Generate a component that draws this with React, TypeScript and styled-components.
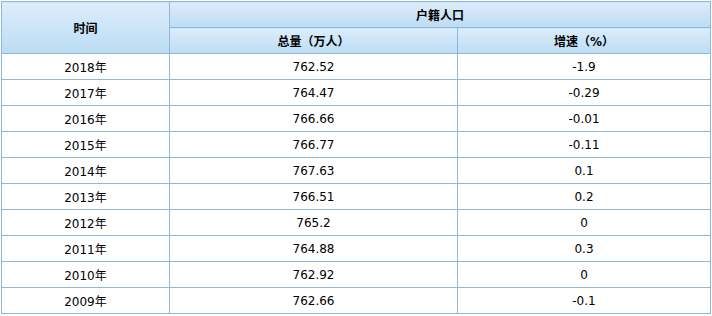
import React from "react"
import styled, { createGlobalStyle } from "styled-components"

const GlobalStyle = createGlobalStyle`
  html, body {
    margin: 0;
    padding: 0;
    background: #fff;
  }
  body {
    font-family: "DejaVu Sans", "Noto Sans CJK SC", sans-serif;
    font-size: 12px;
    color: #000;
  }
`

const Wrapper = styled.div`
  padding: 1px 0 0 1px;
`

const Table = styled.table`
  width: 710px;
  border-collapse: collapse;
  table-layout: fixed;
`

const HeadCell = styled.th`
  border: 1px solid #8fb7da;
  background: linear-gradient(to bottom, #dcedfc, #bcdcf3);
  font-weight: bold;
  text-align: center;
  padding: 0;
  height: 25px;
`

const Cell = styled.td`
  border: 1px solid #8fb7da;
  text-align: center;
  padding: 0;
  height: 25px;
`

const rows = [
  ["2018年", "762.52", "-1.9"],
  ["2017年", "764.47", "-0.29"],
  ["2016年", "766.66", "-0.01"],
  ["2015年", "766.77", "-0.11"],
  ["2014年", "767.63", "0.1"],
  ["2013年", "766.51", "0.2"],
  ["2012年", "765.2", "0"],
  ["2011年", "764.88", "0.3"],
  ["2010年", "762.92", "0"],
  ["2009年", "762.66", "-0.1"],
]

const App = () => {
  return (
    <Wrapper>
      <GlobalStyle />
      <Table>
        <colgroup>
          <col style={{ width: 168 }} />
          <col style={{ width: 288 }} />
          <col />
        </colgroup>
        <thead>
          <tr>
            <HeadCell rowSpan={2}>时间</HeadCell>
            <HeadCell colSpan={2}>户籍人口</HeadCell>
          </tr>
          <tr>
            <HeadCell>总量（万人）</HeadCell>
            <HeadCell>增速（%）</HeadCell>
          </tr>
        </thead>
        <tbody>
          {rows.map((r) => (
            <tr key={r[0]}>
              <Cell>{r[0]}</Cell>
              <Cell>{r[1]}</Cell>
              <Cell>{r[2]}</Cell>
            </tr>
          ))}
        </tbody>
      </Table>
    </Wrapper>
  )
}

export default App
